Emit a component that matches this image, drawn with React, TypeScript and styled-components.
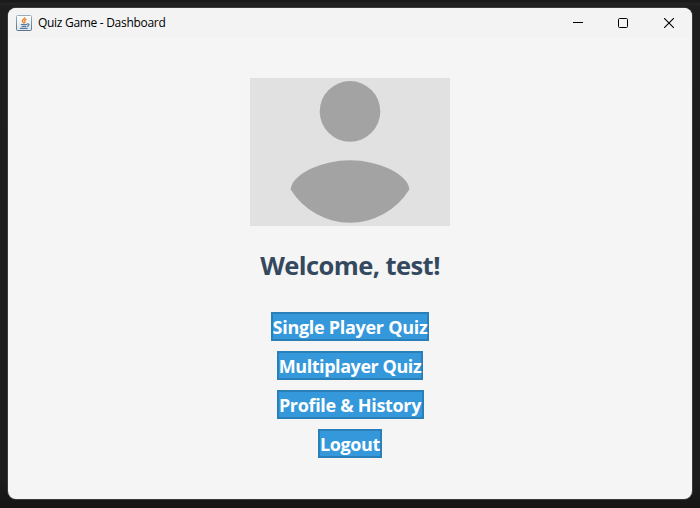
import React from "react";
import styled, { createGlobalStyle } from "styled-components";

const GlobalStyle = createGlobalStyle`
  * { box-sizing: border-box; }
  body {
    margin: 0;
    background: #1c1c1c;
    font-family: "Open Sans", "Noto Sans", sans-serif;
  }
`;

const Desktop = styled.div`
  height: 508px;
  padding: 8px 8px 9px;
  overflow: hidden;
  background: linear-gradient(#1a1a1a 0 2px, #242424 3px, #1e1e1e 8px, #1c1c1c 480px, #161616 504px);
`;

const Window = styled.div`
  height: 491px;
  border-radius: 8px;
  overflow: hidden;
  background: #f5f5f5;
  box-shadow: 0 0 0 1px #3a3a3a;
`;

const TitleBar = styled.header`
  display: flex;
  align-items: center;
  height: 30px;
  padding-left: 8px;
  background: #f3f3f3;
`;

const Title = styled.span`
  flex: 1;
  margin-left: 6px;
  font-size: 12px;
  line-height: 16px;
  letter-spacing: -0.3px;
  color: #000;
`;

const WindowControl = styled.div`
  display: flex;
  align-items: center;
  justify-content: center;
  width: 46px;
  height: 30px;
  &:first-of-type { padding-left: 2px; }
`;

const Content = styled.main`
  display: flex;
  flex-direction: column;
  align-items: center;
  padding-top: 40px;
`;

const Avatar = styled.svg`
  display: block;
  width: 200px;
  height: 148px;
  background: #e1e1e1;
`;

const Welcome = styled.h1`
  margin: 21px 0 0;
  font-size: 25.5px;
  line-height: 36px;
  font-weight: 700;
  letter-spacing: -0.56px;
  white-space: nowrap;
  color: #34495e;
`;

const Menu = styled.nav`
  display: flex;
  flex-direction: column;
  align-items: center;
  gap: 10px;
  margin-top: 29px;
`;

const MenuButton = styled.button<{ $width: number; $spacing: number }>`
  display: flex;
  justify-content: center;
  width: ${(p) => p.$width}px;
  height: 29px;
  padding: 0;
  border: 2px solid #2980b9;
  background: #3498db;
  color: #fff;
  font-family: inherit;
  font-size: 18px;
  line-height: 27px;
  font-weight: 700;
  letter-spacing: ${(p) => p.$spacing}px;
  white-space: nowrap;
`;

const JavaIcon = () => (
  <svg width="16" height="16" viewBox="0 0 16 16" fill="none">
    <defs>
      <linearGradient id="frame" x1="0" y1="0" x2="0" y2="1">
        <stop offset="0" stopColor="#9caebc" />
        <stop offset="1" stopColor="#57758f" />
      </linearGradient>
      <linearGradient id="face" x1="0" y1="0" x2="0" y2="1">
        <stop offset="0" stopColor="#fff" />
        <stop offset="1" stopColor="#dce5eb" />
      </linearGradient>
    </defs>
    <rect x=".5" y=".5" width="15" height="15" rx="1" fill="url(#face)" stroke="url(#frame)" />
    <path d="M9 2.2C9 4.2 6 4.6 6.4 6.2L7.8 8.4M10.6 4.2C8.4 5 8.2 5.8 9 6.6C9.2 7.4 8.8 7.9 8.4 8.3" stroke="#ee8425" strokeWidth="1.3" />
    <path d="M4.8 9.5H11M5.6 11.3H10.2M4 13.4H11.6M11 9C13.8 8.2 13.6 10.9 10.8 11.3" stroke="#54799b" strokeWidth="1.2" />
  </svg>
);

const buttons = [
  { label: "Single Player Quiz", width: 158, spacing: -0.29 },
  { label: "Multiplayer Quiz", width: 146, spacing: -0.44 },
  { label: "Profile & History", width: 147, spacing: -0.32 },
  { label: "Logout", width: 64, spacing: -0.38 },
];

export default function App() {
  return (
    <>
      <GlobalStyle />
      <Desktop>
        <Window>
          <TitleBar>
            <JavaIcon />
            <Title>Quiz Game - Dashboard</Title>
            <WindowControl>
              <svg width="10" height="10"><path d="M0 4.5H10" stroke="#000" /></svg>
            </WindowControl>
            <WindowControl>
              <svg width="10" height="10" fill="none"><rect x=".5" y=".5" width="9" height="9" rx="1" stroke="#000" /></svg>
            </WindowControl>
            <WindowControl>
              <svg width="10" height="10"><path d="M0 0L10 10M10 0L0 10" stroke="#000" strokeWidth="1.1" /></svg>
            </WindowControl>
          </TitleBar>
          <Content>
            <Avatar viewBox="0 0 200 148" fill="#a3a3a3">
              <circle cx="100" cy="33.4" r="30.3" />
              <path d="M40.7 111.5C41.5 96 72 82.2 100 82.2S158.5 96 159.3 111.5A69.6 69.6 0 0 1 40.7 111.5Z" />
            </Avatar>
            <Welcome>Welcome, test!</Welcome>
            <Menu>
              {buttons.map((b) => (
                <MenuButton key={b.label} $width={b.width} $spacing={b.spacing}>{b.label}</MenuButton>
              ))}
            </Menu>
          </Content>
        </Window>
      </Desktop>
    </>
  );
}
